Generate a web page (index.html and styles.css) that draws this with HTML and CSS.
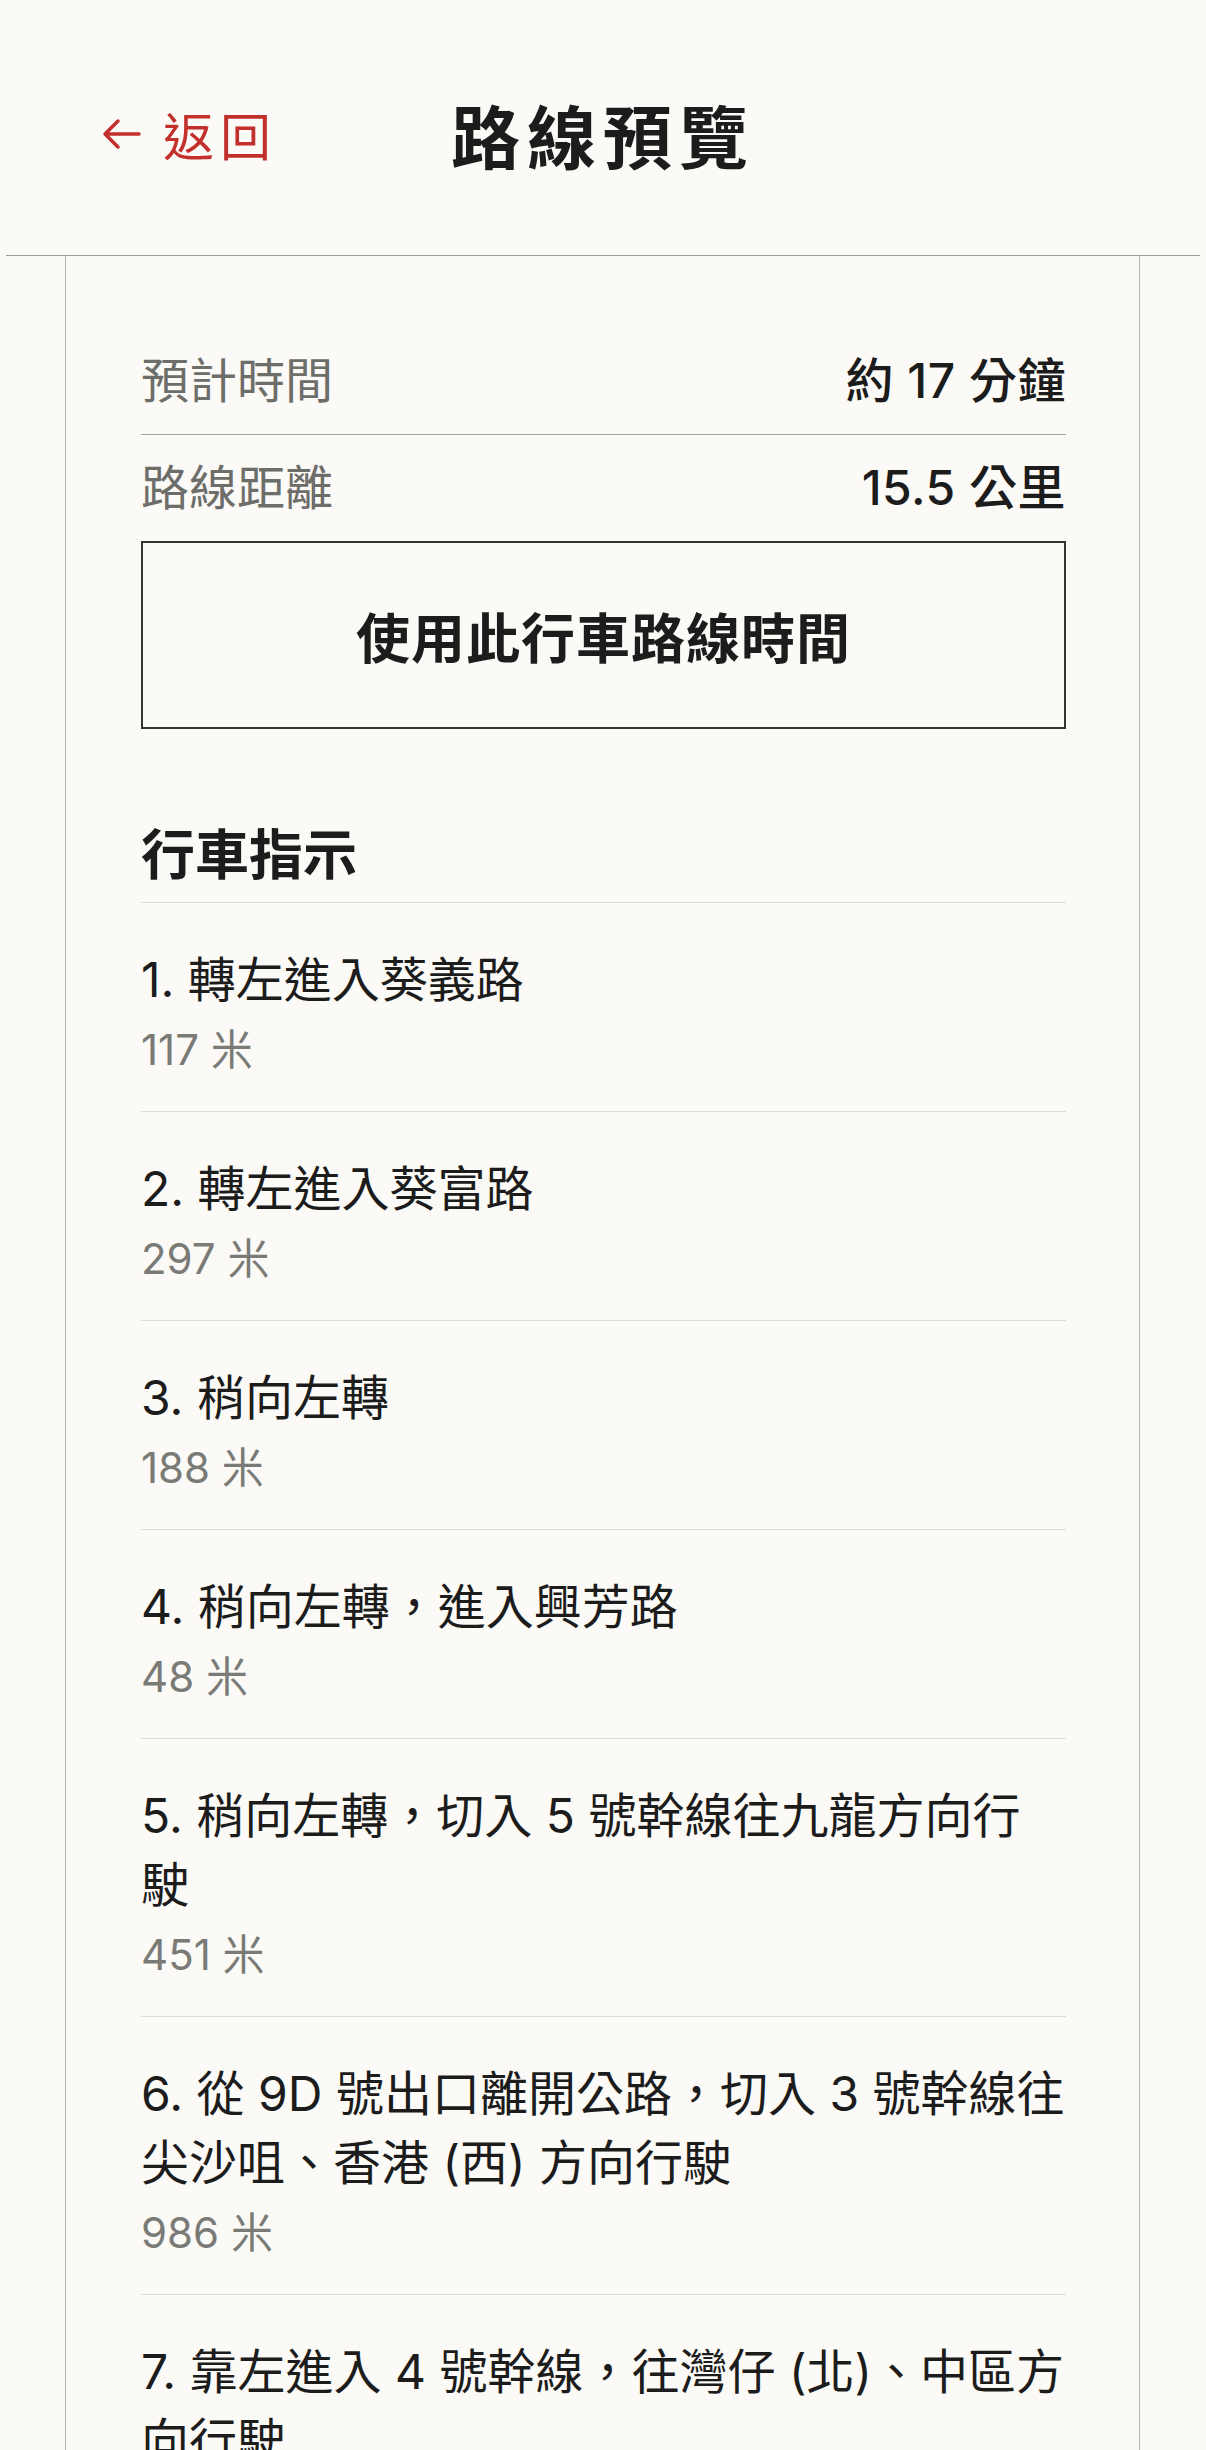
FILE: index.html
```html
<!DOCTYPE html>
<html lang="zh-Hant">
<head>
    <meta charset="UTF-8">
    <meta name="viewport" content="width=device-width, initial-scale=1.0">
    <title>路線預覽</title>
    <link rel="stylesheet" href="styles.css">
</head>
<body>
    <header class="topbar">
        <a class="back-link" href="#">
            <svg class="back-icon" viewBox="0 0 40 32" aria-hidden="true">
                <path d="M38 16H4M17 3L4 16l13 13"/>
            </svg>
            <span>返回</span>
        </a>
        <h1 class="page-title">路線預覽</h1>
        <span></span>
    </header>

    <main class="route-card">
        <div class="summary-row">
            <span class="summary-label">預計時間</span>
            <span class="summary-value">約 17 分鐘</span>
        </div>
        <div class="summary-row">
            <span class="summary-label">路線距離</span>
            <span class="summary-value">15.5 公里</span>
        </div>
        <button class="use-btn" type="button">使用此行車路線時間</button>

        <h2 class="steps-title">行車指示</h2>
        <ol class="steps">
            <li class="step">
                <p class="step-text">1. 轉左進入葵義路</p>
                <p class="step-dist">117 米</p>
            </li>
            <li class="step">
                <p class="step-text">2. 轉左進入葵富路</p>
                <p class="step-dist">297 米</p>
            </li>
            <li class="step">
                <p class="step-text">3. 稍向左轉</p>
                <p class="step-dist">188 米</p>
            </li>
            <li class="step">
                <p class="step-text">4. 稍向左轉，進入興芳路</p>
                <p class="step-dist">48 米</p>
            </li>
            <li class="step">
                <p class="step-text">5. 稍向左轉，切入 5 號幹線往九龍方向行駛</p>
                <p class="step-dist">451 米</p>
            </li>
            <li class="step">
                <p class="step-text">6. 從 9D 號出口離開公路，切入 3 號幹線往尖沙咀、香港 (西) 方向行駛</p>
                <p class="step-dist">986 米</p>
            </li>
            <li class="step">
                <p class="step-text">7. 靠左進入 4 號幹線，往灣仔 (北)、中區方向行駛</p>
                <p class="step-dist">1.2 公里</p>
            </li>
        </ol>
    </main>
</body>
</html>
```

FILE: styles.css
```css
body {
    margin: 0;
    background-color: #fbfaf6;
    color: #1c1c1c;
    font-family: "Inter", "Noto Sans CJK TC", sans-serif;
}

/* top bar */
.topbar {
    display: grid;
    grid-template-columns: 1fr auto 1fr;
    align-items: center;
    height: 243px;
    padding-top: 12px;
    margin: 0 6px;
    border-bottom: 1px solid #9c9c99;
}
.back-link {
    display: flex;
    align-items: center;
    gap: 22px;
    padding-left: 95px;
    color: #c3302c;
    font-size: 51px;
    letter-spacing: 6px;
    text-decoration: none;
}
.back-icon {
    width: 40px;
    height: 32px;
    fill: none;
    stroke: #c3302c;
    stroke-width: 3.5;
    stroke-linecap: round;
    stroke-linejoin: round;
}
.page-title {
    margin: 0;
    font-size: 69px;
    font-weight: 700;
    letter-spacing: 7px;
}

/* card */
.route-card {
    margin-left: 65px;
    width: 925px;
    padding: 72px 73px 0 75px;
    border-left: 1px solid #b5b5b2;
    border-right: 1px solid #b5b5b2;
}
.summary-row {
    display: flex;
    justify-content: space-between;
    align-items: center;
    padding: 25px 0;
    line-height: 56px;
    font-size: 48px;
}
.summary-row + .summary-row {
    border-top: 1px solid #a3a3a0;
}
.summary-label {
    color: #6d6d6a;
}
.summary-value {
    font-weight: 500;
    letter-spacing: 0.5px;
}
.use-btn {
    display: block;
    width: 100%;
    height: 188px;
    background: transparent;
    border: 2px solid #333;
    color: #1c1c1c;
    font-family: inherit;
    font-size: 54px;
    font-weight: 700;
    letter-spacing: 1px;
    cursor: pointer;
}

/* directions */
.steps-title {
    margin: 94px 0 0;
    padding-bottom: 13px;
    font-size: 54px;
    line-height: 66px;
    font-weight: 700;
    border-bottom: 1px solid #dcdbd7;
}
.steps {
    list-style: none;
    margin: 0;
    padding: 0;
}
.step {
    padding: 42px 0 36px;
    border-bottom: 1px solid #dcdbd7;
}
.step-text {
    margin: 0;
    font-size: 48px;
    line-height: 69px;
}
.step-dist {
    margin: 11px 0 0;
    font-size: 42px;
    line-height: 50px;
    color: #7a7a77;
}
```
